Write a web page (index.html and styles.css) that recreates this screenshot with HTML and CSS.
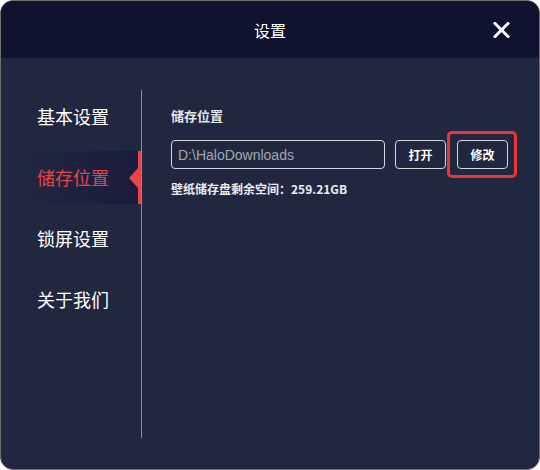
FILE: index.html
```html
<!DOCTYPE html>
<html lang="zh-CN">
<head>
    <meta charset="UTF-8">
    <meta name="viewport" content="width=device-width, initial-scale=1.0">
    <title>设置</title>
    <link rel="stylesheet" href="styles.css">
</head>
<body>
    <div class="window">
        <div class="header">
            <span class="title">设置</span>
            <span class="close">
                <svg width="17" height="16" viewBox="0 0 17 16"><path d="M2 1.5 L15 14.5 M15 1.5 L2 14.5" stroke="#fff" stroke-width="3" stroke-linecap="square"/></svg>
            </span>
        </div>
        <div class="main">
            <ul class="sidebar">
                <li class="nav-item">基本设置</li>
                <li class="nav-item active">储存位置</li>
                <li class="nav-item">锁屏设置</li>
                <li class="nav-item">关于我们</li>
            </ul>
            <div class="content">
                <div class="label">储存位置</div>
                <div class="path-row">
                    <input type="text" class="path" value="D:\HaloDownloads" readonly>
                    <button type="button" class="btn">打开</button>
                    <span class="marked"><button type="button" class="btn">修改</button></span>
                </div>
                <div class="space">壁纸储存盘剩余空间：259.21GB</div>
            </div>
        </div>
    </div>
</body>
</html>
```

FILE: styles.css
```css
* { box-sizing: border-box; }
body { margin: 0; background: #fff; font-family: "Noto Sans CJK SC", "Liberation Sans", sans-serif; }
.window { width: 540px; height: 470px; background: #222740; border: 1px solid #6e6e6e; border-radius: 13px; overflow: hidden; }
.header { height: 57px; background: #0f1330; display: flex; align-items: center; justify-content: center; position: relative; }
.title { color: #fff; font-size: 16px; margin-top: 1px; }
.close { position: absolute; right: 29px; top: 21px; width: 17px; height: 16px; cursor: pointer; }
.close svg { display: block; }
.main { display: flex; padding-top: 32px; }
.sidebar { list-style: none; margin: 0; padding: 0 0 0 20px; width: 141px; height: 348px; border-right: 1px solid #8a8c98; display: flex; flex-direction: column; gap: 8px; }
.nav-item { height: 53px; line-height: 52px; padding-left: 16px; color: #fff; font-size: 18px; position: relative; }
.nav-item.active { color: #e8444a; background: linear-gradient(to right, #222740, #1a1c3b); border-right: 3px solid #e8444a; }
.nav-item.active::after { content: ""; position: absolute; right: 0; top: 17px; border-style: solid; border-width: 10px 9px 10px 0; border-color: transparent #e8444a transparent transparent; }
.content { padding: 17px 0 0 29px; }
.label { color: #e6e6ea; font-size: 13px; font-weight: bold; line-height: 18px; }
.path-row { display: flex; align-items: center; margin-top: 15px; }
.path { width: 214px; height: 29px; border: 1px solid #d6d6dc; border-radius: 4px; background: transparent; color: #a4a6b0; font-family: "Liberation Sans", sans-serif; font-size: 14px; padding: 0 6px; outline: none; }
.btn { height: 29px; width: 51px; margin-left: 10px; background: transparent; border: 1px solid #d6d6dc; border-radius: 4px; color: #fff; font-family: "Noto Sans CJK SC", sans-serif; font-size: 12px; font-weight: bold; cursor: pointer; padding: 0; }
.marked { display: flex; margin: -9px 0 -9px 1px; padding: 6px 6px 6px 7px; border: 3px solid #e8363a; border-radius: 5px; }
.marked .btn { margin-left: 0; }
.space { margin-top: 11px; color: #ececf0; font-size: 12px; font-weight: bold; line-height: 18px; }
```
